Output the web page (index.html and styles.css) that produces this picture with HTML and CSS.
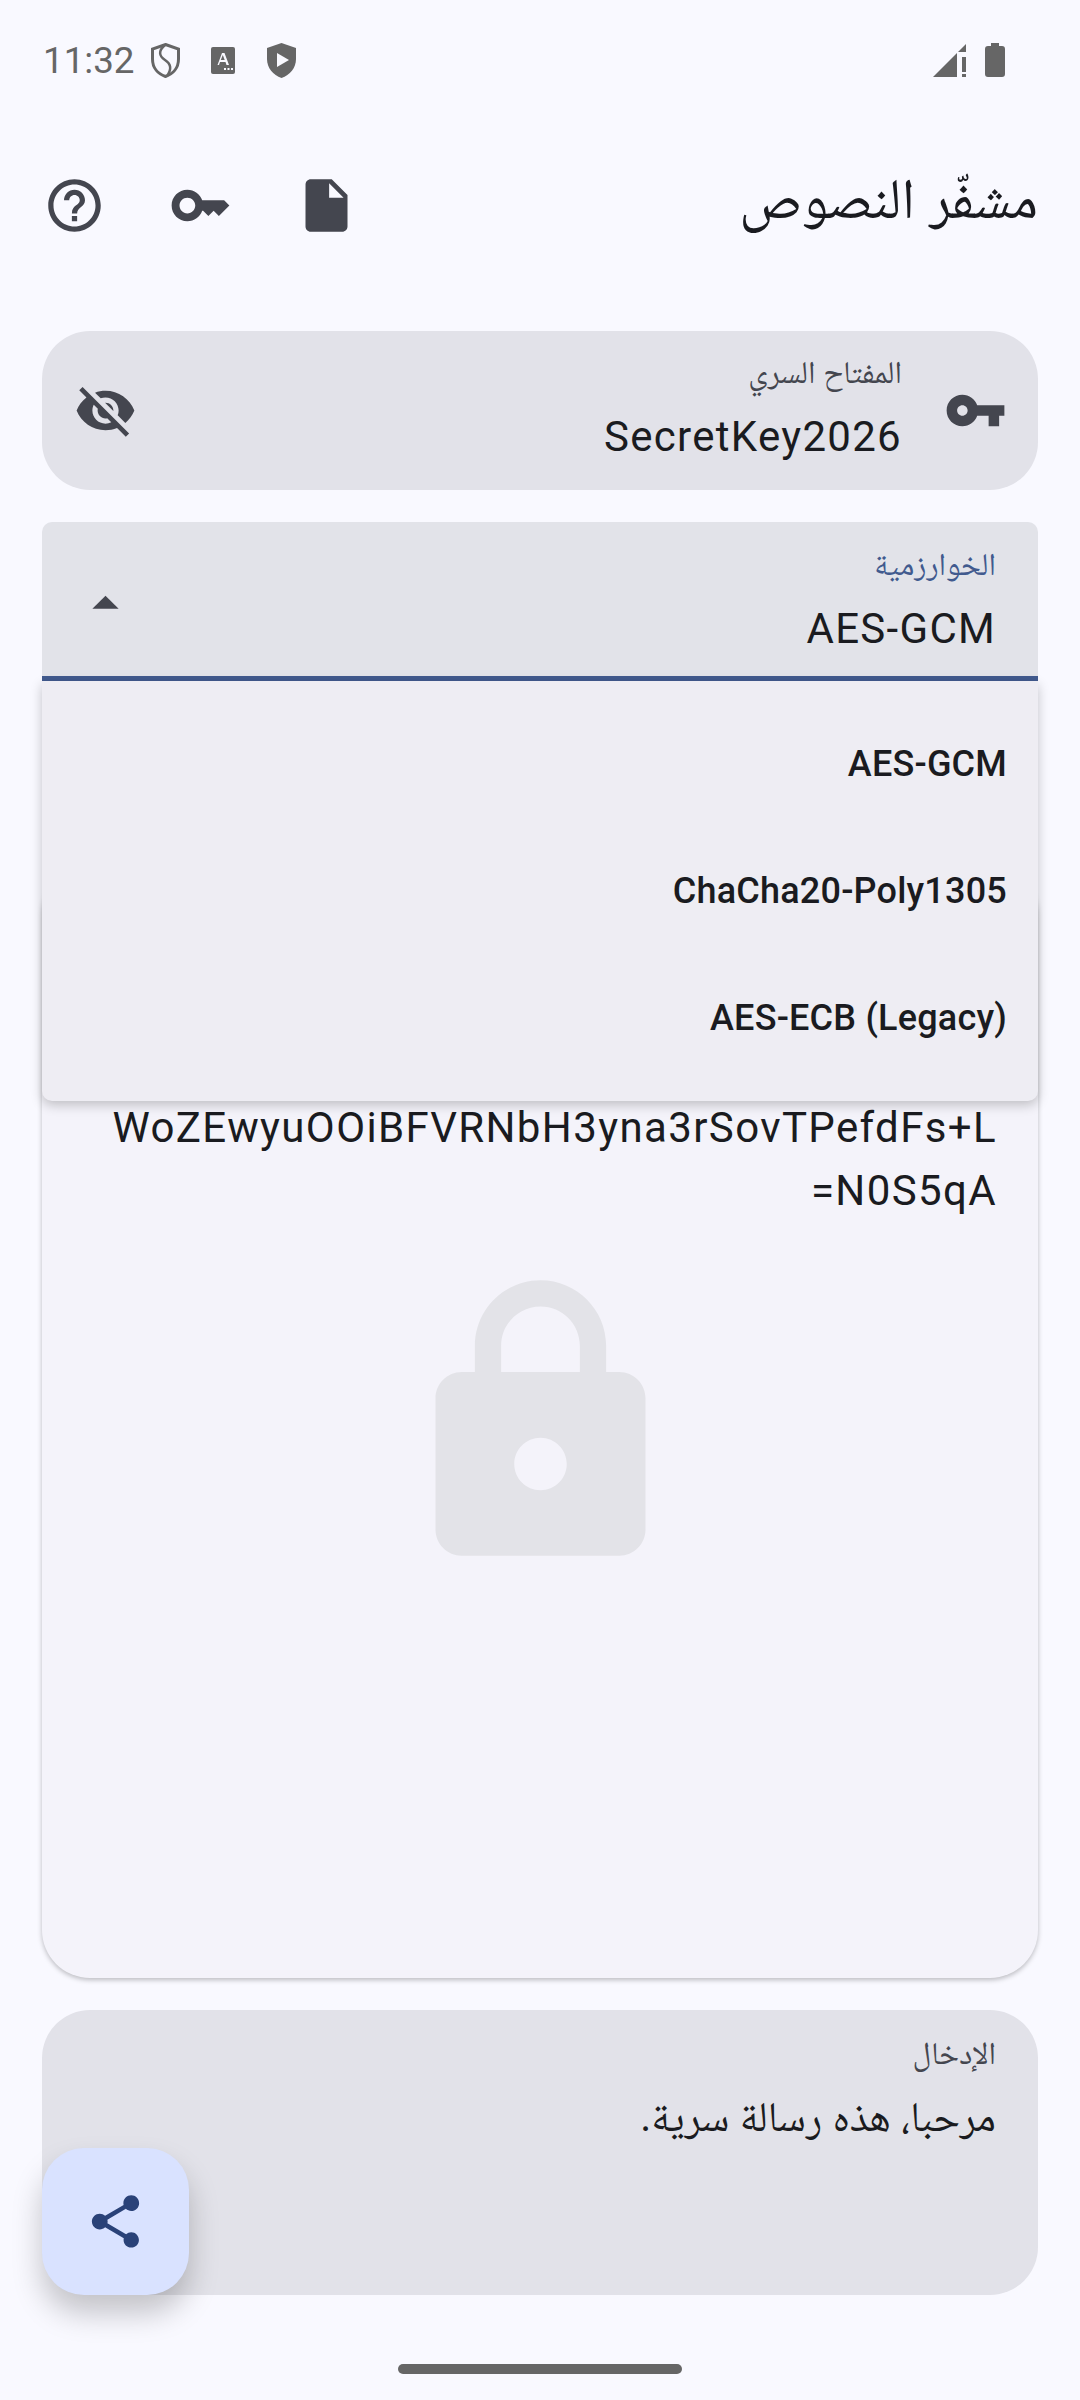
FILE: index.html
```html
<!DOCTYPE html>
<html lang="ar" dir="rtl">
<head>
  <meta charset="UTF-8">
  <title>مشفّر النصوص</title>
  <link rel="stylesheet" href="styles.css">
</head>
<body>
  <div class="status-bar" dir="ltr">
    <span class="clock">11:32</span>
    <svg class="st-icon st-shield" viewBox="0 0 29 35"><path d="M14.500 1.500 27.500 6v10c0 9-5.500 15-13 17.500C7 31 1.500 25 1.500 16V6z" fill="none" stroke="#666" stroke-width="3"/><path d="M14 2C7 8 8 13 14 17c6 4 7 9 2 16" fill="none" stroke="#666" stroke-width="2.500"/></svg>
    <svg class="st-icon st-app" viewBox="0 0 24 27"><path d="M2 0h20a2 2 0 0 1 2 2v23a2 2 0 0 1-2 2H2a2 2 0 0 1-2-2V2a2 2 0 0 1 2-2z" fill="#666"/><path d="M6.500 18 11 6h2.500L18 18h-2.500l-1-3h-5.500l-1 3zM9.800 13h3.900L11.800 8zM13 21h2v2h-2zM16.500 21h2v2h-2zM20 21h2v2h-2z" fill="#f9f9ff"/></svg>
    <svg class="st-icon st-play" viewBox="0 0 29 35"><path d="M14.500 0 29 5v11c0 9-6 16-14.500 19C6 32 0 25 0 16V5z" fill="#666"/><path d="M10 10v14l12-7z" fill="#f9f9ff"/></svg>
    <span class="status-gap"></span>
    <svg class="st-icon st-signal" viewBox="0 0 33 33"><path d="M0 33 24 9v24zM25 8l8-8v8zM29 13h4v15h-4zM29 30h4v3h-4z" fill="#666"/></svg>
    <svg class="st-icon st-battery" viewBox="0 0 20 34"><path d="M6 0h8v3h3a3 3 0 0 1 3 3v25a3 3 0 0 1-3 3H3a3 3 0 0 1-3-3V6a3 3 0 0 1 3-3h3z" fill="#666"/></svg>
  </div>

  <header class="app-bar">
    <h1>مشفّر النصوص</h1>
    <div class="actions" dir="ltr">
      <svg class="icon" viewBox="0 0 24 24"><path d="M11 18h2v-2h-2v2zm1-16C6.480 2 2 6.480 2 12s4.480 10 10 10 10-4.480 10-10S17.520 2 12 2zm0 18c-4.410 0-8-3.590-8-8s3.590-8 8-8 8 3.590 8 8-3.590 8-8 8zm0-14c-2.210 0-4 1.790-4 4h2c0-1.100.9-2 2-2s2 .9 2 2c0 2-3 1.750-3 5h2c0-2.250 3-2.500 3-5 0-2.210-1.790-4-4-4z"/></svg>
      <svg class="icon" viewBox="0 0 24 24"><path d="M21 10h-8.350C11.830 7.670 9.610 6 7 6c-3.310 0-6 2.690-6 6s2.690 6 6 6c2.610 0 4.830-1.670 5.650-4H13l2 2 2-2 2 2 4-4.040L21 10zM7 15c-1.650 0-3-1.350-3-3s1.350-3 3-3 3 1.350 3 3-1.350 3-3 3z"/></svg>
      <svg class="icon" viewBox="0 0 24 24"><path d="M6 2c-1.100 0-1.990.9-1.990 2L4 20c0 1.100.89 2 1.990 2H18c1.100 0 2-.9 2-2V8l-6-6H6zm7 7V3.500L18.500 9H13z"/></svg>
    </div>
  </header>

  <main class="content">
    <section class="field key-field">
      <svg class="icon" viewBox="0 0 24 24"><path d="M12.650 10C11.830 7.670 9.610 6 7 6c-3.310 0-6 2.690-6 6s2.690 6 6 6c2.610 0 4.830-1.670 5.650-4H17v4h4v-4h2v-4H12.650zM7 14c-1.100 0-2-.9-2-2s.9-2 2-2 2 .9 2 2-.9 2-2 2z"/></svg>
      <div class="field-text">
        <label class="field-label">المفتاح السري</label>
        <div class="field-value" dir="ltr">SecretKey2026</div>
      </div>
      <svg class="icon" viewBox="0 0 24 24"><path d="M12 7c2.760 0 5 2.240 5 5 0 .65-.13 1.260-.36 1.830l2.920 2.920c1.510-1.260 2.700-2.890 3.430-4.750-1.730-4.390-6-7.500-11-7.500-1.400 0-2.740.25-3.980.7l2.160 2.160C10.740 7.130 11.350 7 12 7zM2 4.270l2.280 2.280.46.46C3.080 8.300 1.780 10.020 1 12c1.730 4.390 6 7.500 11 7.500 1.550 0 3.030-.3 4.380-.84l.42.42L19.730 22 21 20.730 3.270 3 2 4.270zM7.530 9.800l1.550 1.550c-.05.21-.08.43-.08.65 0 1.660 1.340 3 3 3 .22 0 .44-.03.65-.08l1.550 1.550c-.67.33-1.410.53-2.200.53-2.760 0-5-2.240-5-5 0-.79.2-1.530.53-2.200zm4.310-.78l3.150 3.150.02-.16c0-1.660-1.340-3-3-3l-.17.01z"/></svg>
    </section>

    <section class="select-wrap">
      <div class="select-field">
        <div class="field-text">
          <label class="field-label select-label">الخوارزمية</label>
          <div class="field-value" dir="ltr">AES-GCM</div>
        </div>
        <svg class="icon select-arrow" viewBox="0 0 24 24"><path d="M7 14l5-5 5 5z"/></svg>
      </div>
      <ul class="menu" dir="ltr">
        <li>AES-GCM</li>
        <li>ChaCha20-Poly1305</li>
        <li>AES-ECB (Legacy)</li>
      </ul>
    </section>

    <section class="output-card">
      <p class="output-text" dir="ltr">WoZEwyuOOiBFVRNbH3yna3rSovTPefdFs+L<br>=N0S5qA</p>
      <svg class="lock" viewBox="0 0 24 24"><path d="M18 8h-1V6c0-2.760-2.240-5-5-5S7 3.240 7 6v2H6c-1.100 0-2 .9-2 2v10c0 1.100.9 2 2 2h12c1.100 0 2-.9 2-2V10c0-1.100-.9-2-2-2zm-6 9c-1.100 0-2-.9-2-2s.9-2 2-2 2 .9 2 2-.9 2-2 2zM9 8V6c0-1.660 1.340-3 3-3s3 1.340 3 3v2H9z"/></svg>
    </section>

    <section class="field input-field">
      <label class="field-label">الإدخال</label>
      <div class="input-value">مرحبا، هذه رسالة سرية.</div>
      <button class="fab" type="button">
        <svg viewBox="0 0 24 24"><path d="M18 16.080c-.76 0-1.440.3-1.960.77L8.910 12.700c.05-.23.09-.46.09-.7s-.04-.47-.09-.7l7.050-4.110c.54.5 1.250.81 2.040.81 1.660 0 3-1.340 3-3s-1.340-3-3-3-3 1.340-3 3c0 .24.04.47.09.7L8.040 9.810C7.500 9.310 6.790 9 6 9c-1.660 0-3 1.340-3 3s1.340 3 3 3c.79 0 1.500-.31 2.040-.81l7.120 4.160c-.05.21-.08.43-.08.65 0 1.610 1.310 2.920 2.920 2.920 1.610 0 2.920-1.310 2.920-2.920s-1.310-2.920-2.920-2.920z"/></svg>
      </button>
    </section>
  </main>

  <div class="home-bar"></div>
</body>
</html>
```

FILE: styles.css
```css
* {
  box-sizing: border-box;
}
html, body {
  margin: 0;
  padding: 0;
}
body {
  width: 1080px;
  height: 2400px;
  overflow: hidden;
  background: #f9f9ff;
  color: #1a1b20;
  font-family: Roboto, "Noto Naskh Arabic", sans-serif;
  position: relative;
}
.status-bar {
  height: 120px;
  display: flex;
  align-items: center;
  padding: 0 75px 0 43px;
}
.clock {
  font-size: 36.750px;
  color: #666;
  width: 108px;
}
.st-icon {
  display: block;
}
.st-shield {
  width: 29px;
  height: 35px;
}
.st-app {
  width: 24px;
  height: 27px;
  margin-left: 31px;
}
.st-play {
  width: 29px;
  height: 35px;
  margin-left: 32px;
}
.status-gap {
  flex: 1;
}
.st-signal {
  width: 33px;
  height: 33px;
}
.st-battery {
  width: 20px;
  height: 34px;
  margin-left: 19px;
}
.icon {
  width: 63px;
  height: 63px;
  fill: #44464f;
  flex: none;
  display: block;
}
.app-bar {
  height: 171px;
  display: flex;
  align-items: center;
  justify-content: space-between;
  padding: 0 42px 0 43px;
}
.app-bar h1 {
  margin: 0;
  font-size: 57px;
  font-weight: 400;
}
.actions {
  display: flex;
  gap: 63px;
}
.content {
  padding: 40px 42px 0;
  display: flex;
  flex-direction: column;
}
.field {
  background: #e2e2e9;
  border-radius: 48px;
}
.key-field {
  height: 159px;
  display: flex;
  align-items: center;
  padding: 0 31px 0 32px;
  gap: 42px;
}
.field-text {
  flex: 1;
  min-width: 0;
}
.field-label {
  display: block;
  font-size: 31.500px;
  color: #44464f;
  line-height: 36px;
}
.field-value {
  font-size: 42px;
  line-height: 60px;
  margin-top: 16px;
  text-align: right;
  letter-spacing: 1.300px;
}
.select-wrap {
  margin-top: 32px;
  position: relative;
  z-index: 2;
  height: 159px;
}
.select-field {
  height: 159px;
  background: #e2e3e9;
  border-radius: 10px 10px 0 0;
  border-bottom: 5px solid #415a8e;
  display: flex;
  align-items: center;
  padding: 8px 42px 0 32px;
}
.select-arrow {
  position: relative;
  top: 0;
}
.select-label {
  color: #415a8e;
}
.menu {
  position: absolute;
  top: 159px;
  left: 0;
  right: 0;
  height: 420px;
  margin: 0;
  padding: 20px 31px;
  list-style: none;
  background: #eeedf3;
  border-radius: 0 0 10px 10px;
  box-shadow: 0 4px 12px rgba(0, 0, 0, 0.22);
}
.menu li {
  height: 127px;
  line-height: 127px;
  font-size: 36px;
  font-weight: 500;
  text-align: right;
  letter-spacing: 0.200px;
}
.output-card {
  margin-top: 185px;
  height: 1112px;
  background: #f4f3fa;
  border-radius: 48px;
  box-shadow: 0 2px 5px rgba(0, 0, 0, 0.25);
  padding: 230px 41px 0;
  display: flex;
  flex-direction: column;
  align-items: center;
}
.output-text {
  margin: 0;
  width: 100%;
  font-size: 42px;
  line-height: 63px;
  text-align: right;
  letter-spacing: 1.380px;
}
.lock {
  width: 315px;
  height: 315px;
  margin-top: 45px;
  fill: #e3e3e8;
}
.input-field {
  margin-top: 32px;
  height: 285px;
  padding: 26px 42px;
  position: relative;
}
.input-value {
  font-size: 42px;
  line-height: 63px;
  margin-top: 13px;
}
.fab {
  position: absolute;
  left: 0;
  bottom: 0;
  width: 147px;
  height: 147px;
  border: none;
  padding: 0;
  border-radius: 42px;
  background: #d9e2ff;
  display: flex;
  align-items: center;
  justify-content: center;
  box-shadow: 0 18px 30px rgba(0, 0, 0, 0.22);
}
.fab svg {
  width: 63px;
  height: 63px;
  fill: #2a4278;
}
.home-bar {
  position: absolute;
  left: 398px;
  top: 2364px;
  width: 284px;
  height: 10px;
  border-radius: 5px;
  background: #666;
}
```
